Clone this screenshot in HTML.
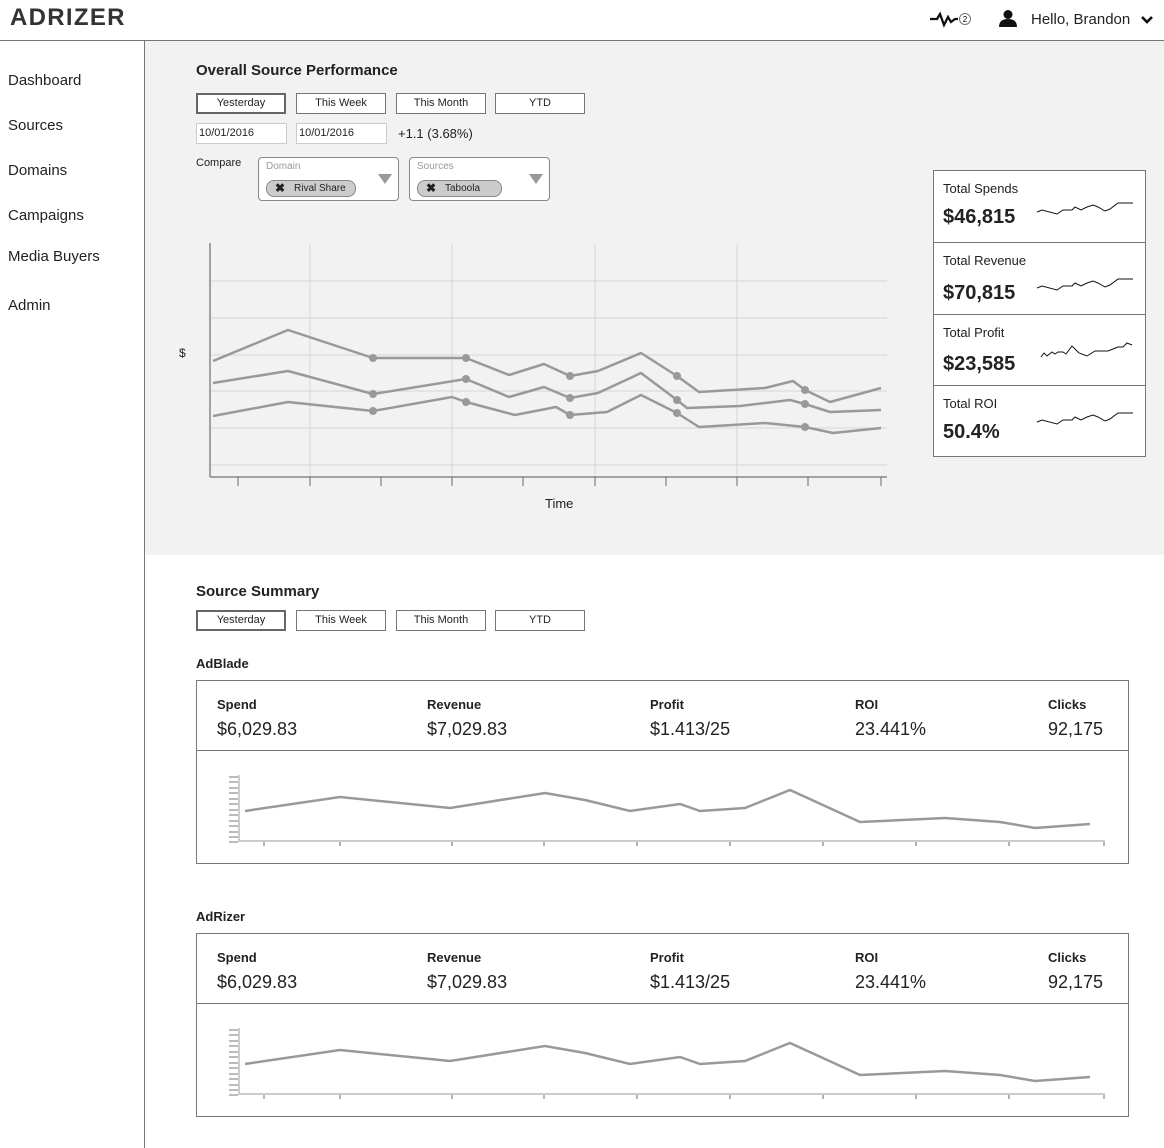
<!DOCTYPE html>
<html><head><meta charset="utf-8">
<style>
*{margin:0;padding:0;box-sizing:border-box}
body{width:1164px;height:1148px;position:relative;background:#fff;font-family:"Liberation Sans",Arial,sans-serif;color:#222;overflow:hidden}
.a{position:absolute}
.btn{position:absolute;height:21px;width:90px;border:1px solid #777;background:#fff;font-size:11px;text-align:center;line-height:19px;color:#222}
.btn.sel{border:2px solid #666;line-height:17px}
.inp{position:absolute;height:21px;width:91px;border:1px solid #ccc;background:#fff;font-size:11px;line-height:19px;padding-left:2px}
.nav{position:absolute;left:8px;font-size:15px;color:#222}
.dd{position:absolute;top:157px;height:44px;border:1px solid #888;border-radius:4px;background:#fff}
.dd .l{position:absolute;left:7px;top:3px;font-size:10px;color:#999}
.chip{position:absolute;left:7px;top:22px;height:17px;border:1px solid #888;border-radius:8px;background:#ccc;font-size:10px;line-height:15px;padding-left:27px;color:#222}
.chip b{position:absolute;left:8px;top:0;font-size:12px}
.tri{position:absolute;right:6px;top:16px;width:0;height:0;border-left:7px solid transparent;border-right:7px solid transparent;border-top:10px solid #999}
.card{position:absolute;left:933px;width:213px;border:1px solid #777;background:#fff}
.card .t{position:absolute;left:9px;top:10px;font-size:13px}
.card .v{position:absolute;left:9px;font-size:20px;font-weight:bold}
.box{position:absolute;left:196px;width:933px;border:1px solid #777;background:#fff}
.box .div{position:absolute;left:0;right:0;top:69px;border-top:1px solid #777}
.lb{position:absolute;top:16px;font-size:13px;font-weight:bold}
.vl{position:absolute;top:38px;font-size:18px}
h2{position:absolute;font-size:15px;font-weight:bold}
h3{position:absolute;font-size:13px;font-weight:bold}
</style></head><body>
<div class="a" style="left:10px;top:4px;font-size:24px;font-weight:bold;letter-spacing:1.3px;color:#333">ADRIZER</div>
<svg class="a" style="left:928px;top:10px" width="46" height="20"><polyline points="2,9 9,9 12,4 16,15 20,7 23,12 27,9 30,9" fill="none" stroke="#111" stroke-width="2.3"/><circle cx="37" cy="9" r="5.5" fill="#fff" stroke="#777"/><text x="37" y="12" font-size="8" text-anchor="middle" font-family="Liberation Sans">2</text></svg>
<svg class="a" style="left:998px;top:9px" width="20" height="20"><circle cx="10" cy="5.5" r="4.5" fill="#111"/><path d="M1 18 Q1 10 10 10 Q19 10 19 18Z" fill="#111"/></svg>
<div class="a" style="left:1031px;top:11px;font-size:15px">Hello, Brandon</div>
<svg class="a" style="left:1140px;top:14px" width="14" height="12"><polyline points="2,3 7,8 12,3" fill="none" stroke="#111" stroke-width="2.6"/></svg>
<div class="a" style="left:0;top:40px;width:1164px;border-top:1px solid #777"></div>
<div class="a" style="left:144px;top:41px;height:1107px;border-left:1px solid #777"></div>
<div class="a" style="left:145px;top:41px;width:1019px;height:514px;background:#f2f2f2"></div>
<div class="nav" style="top:72px">Dashboard</div>
<div class="nav" style="top:117px">Sources</div>
<div class="nav" style="top:162px">Domains</div>
<div class="nav" style="top:207px">Campaigns</div>
<div class="nav" style="top:248px">Media Buyers</div>
<div class="nav" style="top:297px">Admin</div>

<h2 style="left:196px;top:62px">Overall Source Performance</h2>
<div class="btn sel" style="left:196px;top:93px">Yesterday</div>
<div class="btn" style="left:296px;top:93px">This Week</div>
<div class="btn" style="left:396px;top:93px">This Month</div>
<div class="btn" style="left:495px;top:93px">YTD</div>
<div class="inp" style="left:196px;top:123px">10/01/2016</div>
<div class="inp" style="left:296px;top:123px">10/01/2016</div>
<div class="a" style="left:398px;top:126px;font-size:13px">+1.1 (3.68%)</div>
<div class="a" style="left:196px;top:157px;font-size:11px">Compare</div>
<div class="dd" style="left:258px;width:141px"><div class="l">Domain</div><div class="chip" style="width:90px"><b>✖</b>Rival Share</div><div class="tri"></div></div>
<div class="dd" style="left:409px;width:141px"><div class="l">Sources</div><div class="chip" style="width:85px"><b>✖</b>Taboola</div><div class="tri"></div></div>

<div class="a" style="left:179px;top:346px;font-size:12px">$</div>
<div class="a" style="left:545px;top:496px;font-size:13px">Time</div>

<div class="card" style="top:170px;height:73px"><div class="t">Total Spends</div><div class="v" style="top:35px">$46,815</div></div>
<div class="card" style="top:242px;height:73px"><div class="t">Total Revenue</div><div class="v" style="top:39px">$70,815</div></div>
<div class="card" style="top:314px;height:72px"><div class="t">Total Profit</div><div class="v" style="top:38px">$23,585</div></div>
<div class="card" style="top:385px;height:72px"><div class="t">Total ROI</div><div class="v" style="top:35px">50.4%</div></div>

<h2 style="left:196px;top:583px">Source Summary</h2>
<div class="btn sel" style="left:196px;top:610px">Yesterday</div>
<div class="btn" style="left:296px;top:610px">This Week</div>
<div class="btn" style="left:396px;top:610px">This Month</div>
<div class="btn" style="left:495px;top:610px">YTD</div>

<h3 style="left:196px;top:656px">AdBlade</h3>
<div class="box" style="top:680px;height:184px"><div class="div"></div>
<div class="lb" style="left:20px">Spend</div><div class="vl" style="left:20px">$6,029.83</div>
<div class="lb" style="left:230px">Revenue</div><div class="vl" style="left:230px">$7,029.83</div>
<div class="lb" style="left:453px">Profit</div><div class="vl" style="left:453px">$1.413/25</div>
<div class="lb" style="left:658px">ROI</div><div class="vl" style="left:658px">23.441%</div>
<div class="lb" style="left:851px">Clicks</div><div class="vl" style="left:851px">92,175</div>
</div>
<h3 style="left:196px;top:909px">AdRizer</h3>
<div class="box" style="top:933px;height:184px"><div class="div"></div>
<div class="lb" style="left:20px">Spend</div><div class="vl" style="left:20px">$6,029.83</div>
<div class="lb" style="left:230px">Revenue</div><div class="vl" style="left:230px">$7,029.83</div>
<div class="lb" style="left:453px">Profit</div><div class="vl" style="left:453px">$1.413/25</div>
<div class="lb" style="left:658px">ROI</div><div class="vl" style="left:658px">23.441%</div>
<div class="lb" style="left:851px">Clicks</div><div class="vl" style="left:851px">92,175</div>
</div>

<svg class="a" style="left:0;top:0" width="1164" height="1148">
<g stroke="#d6d6d6" stroke-width="1">
<line x1="210" y1="281" x2="887" y2="281"/><line x1="210" y1="318" x2="887" y2="318"/><line x1="210" y1="355" x2="887" y2="355"/><line x1="210" y1="391" x2="887" y2="391"/><line x1="210" y1="428" x2="887" y2="428"/><line x1="210" y1="465" x2="887" y2="465"/>
<line x1="310" y1="244" x2="310" y2="477"/><line x1="452" y1="244" x2="452" y2="477"/><line x1="595" y1="244" x2="595" y2="477"/><line x1="737" y1="244" x2="737" y2="477"/>
</g>
<g stroke="#888" stroke-width="1.5"><line x1="210" y1="243" x2="210" y2="477"/><line x1="210" y1="477" x2="887" y2="477"/></g>
<g stroke="#666" stroke-width="1"><line x1="238" y1="477" x2="238" y2="486"/><line x1="310" y1="477" x2="310" y2="486"/><line x1="381" y1="477" x2="381" y2="486"/><line x1="452" y1="477" x2="452" y2="486"/><line x1="523" y1="477" x2="523" y2="486"/><line x1="595" y1="477" x2="595" y2="486"/><line x1="666" y1="477" x2="666" y2="486"/><line x1="737" y1="477" x2="737" y2="486"/><line x1="808" y1="477" x2="808" y2="486"/><line x1="881" y1="477" x2="881" y2="486"/></g>
<g fill="none" stroke="#999" stroke-width="2.5" stroke-linejoin="round">
<polyline points="213,361 288,330 373,358 466,358 509,375 544,364 570,376 598,371 641,353 677,376 699,392 765,388 793,381 805,390 830,402 881,388"/>
<polyline points="213,383 288,371 373,394 466,379 509,397 544,387 570,398 598,393 641,373 677,400 687,408 740,406 790,400 805,404 830,412 881,410"/>
<polyline points="213,416 288,402 373,411 452,397 466,402 515,415 556,407 570,415 607,412 641,395 677,413 699,427 765,423 805,427 833,433 881,428"/>
</g>
<g fill="#999">
<circle cx="373" cy="358" r="4"/><circle cx="466" cy="358" r="4"/><circle cx="570" cy="376" r="4"/><circle cx="677" cy="376" r="4"/><circle cx="805" cy="390" r="4"/>
<circle cx="373" cy="394" r="4"/><circle cx="466" cy="379" r="4"/><circle cx="570" cy="398" r="4"/><circle cx="677" cy="400" r="4"/><circle cx="805" cy="404" r="4"/>
<circle cx="373" cy="411" r="4"/><circle cx="466" cy="402" r="4"/><circle cx="570" cy="415" r="4"/><circle cx="677" cy="413" r="4"/><circle cx="805" cy="427" r="4"/>
</g>
<g fill="none" stroke="#111" stroke-width="1">
<polyline points="1037,212 1042,210 1057,214 1063,210 1072,210 1075,207 1081,210 1087,207 1093,205 1098,207 1105,211 1110,209 1118,203 1133,203"/>
<polyline transform="translate(0,76)" points="1037,212 1042,210 1057,214 1063,210 1072,210 1075,207 1081,210 1087,207 1093,205 1098,207 1105,211 1110,209 1118,203 1133,203"/>
<polyline transform="translate(0,210)" points="1037,212 1042,210 1057,214 1063,210 1072,210 1075,207 1081,210 1087,207 1093,205 1098,207 1105,211 1110,209 1118,203 1133,203"/>
<polyline points="1041,357 1044,353 1047,356 1052,352 1055,354 1058,352 1063,352 1066,354 1072,346 1079,353 1087,356 1095,351 1108,351 1118,347 1123,347 1127,343 1132,345"/>
</g>
<g id="mini">
<line x1="239" y1="775" x2="239" y2="842" stroke="#ccc" stroke-width="2"/>
<line x1="239" y1="841" x2="1105" y2="841" stroke="#ccc" stroke-width="2"/>
<path d="M229 777h9M229 782h9M229 788h9M229 793h9M229 799h9M229 804h9M229 810h9M229 815h9M229 821h9M229 826h9M229 832h9M229 837h9M229 842h9" stroke="#777" stroke-width="1"/>
<path d="M264 842v4M340 842v4M452 842v4M544 842v4M637 842v4M730 842v4M823 842v4M916 842v4M1009 842v4M1104 842v4" stroke="#666" stroke-width="1"/>
<polyline fill="none" stroke="#999" stroke-width="2.5" points="245,811 340,797 450,808 545,793 585,800 630,811 680,804 700,811 745,808 790,790 860,822 945,818 1000,822 1035,828 1090,824"/>
</g>
<use href="#mini" transform="translate(0,253)"/>
</svg>
</body></html>
